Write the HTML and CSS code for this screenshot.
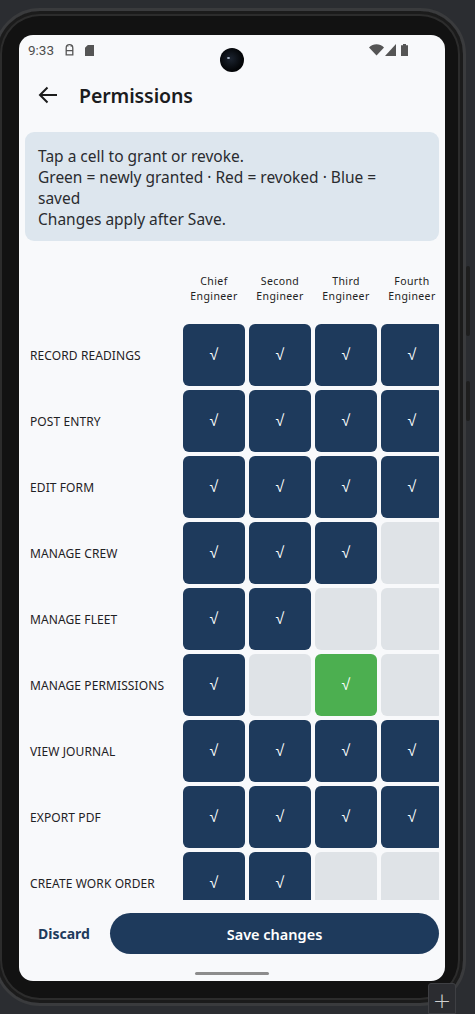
FILE: index.html
```html
<!DOCTYPE html>
<html lang="en">
<head>
<meta charset="utf-8">
<title>Permissions</title>
<link rel="stylesheet" href="styles.css">
</head>
<body>
<div class="phone">
  <div class="side-btn side-btn-1"></div>
  <div class="side-btn side-btn-2"></div>
  <div class="screen">
    <div class="camera"><span class="lens"></span></div>
    <div class="status">
      <div class="status-left">
        <span class="time">9:33</span>
        <svg class="st-icon" width="9" height="12" viewBox="0 0 9 12"><path d="M1.2 4a3.3 3.3 0 0 1 6.6 0v6.8H1.2z M1.2 6.6h6.6" fill="none" stroke="#555" stroke-width="1.3"/><path d="M2 1.2l1 1.4M7 1.2 6 2.6" stroke="#555" stroke-width="1"/></svg>
        <svg class="st-icon sd" width="9" height="11" viewBox="0 0 9 11"><path d="M2.8 0H9v11H0V2.8z" fill="#555"/></svg>
      </div>
      <div class="status-right">
        <svg width="15" height="12" viewBox="0 0 15 12"><path d="M0 3.4C4.3 -0.9 10.7 -0.9 15 3.4L7.5 11.5z" fill="#555"/></svg>
        <svg width="11" height="12" viewBox="0 0 11 12"><path d="M11 0v12H0z" fill="#555"/></svg>
        <svg width="7" height="12" viewBox="0 0 7 12"><path d="M2 0h3v1.2h2V12H0V1.2h2z" fill="#555"/></svg>
      </div>
    </div>
    <div class="appbar">
      <svg class="back" width="20" height="18" viewBox="0 0 20 18"><path d="M19 9H2M9.5 1.5 2 9l7.5 7.5" fill="none" stroke="#1c1c1c" stroke-width="2"/></svg>
      <h1 class="title">Permissions</h1>
    </div>
    <div class="content">
      <div class="info">
        Tap a cell to grant or revoke.<br>
        Green = newly granted · Red = revoked · Blue = saved<br>
        Changes apply after Save.
      </div>
      <div class="matrix-wrap">
        <div class="matrix">
          <div class="corner"></div>
          <div class="col-head">Chief<br>Engineer</div>
          <div class="col-head">Second<br>Engineer</div>
          <div class="col-head">Third<br>Engineer</div>
          <div class="col-head">Fourth<br>Engineer</div>

          <div class="row-label">RECORD READINGS</div>
          <div class="cell on">√</div><div class="cell on">√</div><div class="cell on">√</div><div class="cell on">√</div>

          <div class="row-label">POST ENTRY</div>
          <div class="cell on">√</div><div class="cell on">√</div><div class="cell on">√</div><div class="cell on">√</div>

          <div class="row-label">EDIT FORM</div>
          <div class="cell on">√</div><div class="cell on">√</div><div class="cell on">√</div><div class="cell on">√</div>

          <div class="row-label">MANAGE CREW</div>
          <div class="cell on">√</div><div class="cell on">√</div><div class="cell on">√</div><div class="cell off"></div>

          <div class="row-label">MANAGE FLEET</div>
          <div class="cell on">√</div><div class="cell on">√</div><div class="cell off"></div><div class="cell off"></div>

          <div class="row-label">MANAGE PERMISSIONS</div>
          <div class="cell on">√</div><div class="cell off"></div><div class="cell new">√</div><div class="cell off"></div>

          <div class="row-label">VIEW JOURNAL</div>
          <div class="cell on">√</div><div class="cell on">√</div><div class="cell on">√</div><div class="cell on">√</div>

          <div class="row-label">EXPORT PDF</div>
          <div class="cell on">√</div><div class="cell on">√</div><div class="cell on">√</div><div class="cell on">√</div>

          <div class="row-label">CREATE WORK ORDER</div>
          <div class="cell on">√</div><div class="cell on">√</div><div class="cell off"></div><div class="cell off"></div>
        </div>
      </div>
      <div class="actions">
        <button class="discard">Discard</button>
        <button class="save">Save changes</button>
      </div>
    </div>
    <div class="navbar"><span class="handle"></span></div>
  </div>
</div>
<div class="emu-plus">+</div>
</body>
</html>
```
FILE: styles.css
```css
* { box-sizing: border-box; }
html, body { margin: 0; padding: 0; }
body {
  width: 475px;
  height: 1014px;
  overflow: hidden;
  background: #2b2d31;
  font-family: "Noto Sans", "Liberation Sans", sans-serif;
  position: relative;
}
.phone {
  position: relative;
  width: 472px;
  height: 998px;
  margin: 8px 0 0 -6px;
  padding: 24px 0 0 22px;
  background: #121212;
  border-radius: 46px;
  border: 3px solid #3a3b3d;
  box-shadow: inset 0 0 0 3px #1b1b1b, inset 0 0 0 5px #2c2c2c;
}
.side-btn {
  position: absolute;
  right: -7px;
  width: 4px;
  background: #1e1e1e;
  border-radius: 2px;
}
.side-btn-1 { top: 255px; height: 70px; }
.side-btn-2 { top: 370px; height: 40px; }
.screen {
  position: relative;
  width: 426px;
  height: 946px;
  background: #f8f9fb;
  border-radius: 14px;
  overflow: hidden;
  display: flex;
  flex-direction: column;
}
.camera {
  position: absolute;
  left: 201px;
  top: 13px;
  width: 24px;
  height: 24px;
  border-radius: 50%;
  background: radial-gradient(circle at 45% 45%, #1c2430 0%, #05070a 60%, #000 100%);
}
.lens {
  position: absolute;
  left: 7px; top: 9px;
  width: 3px; height: 2px;
  border-radius: 50%;
  background: #a8b4c4;
}
.status {
  height: 30px;
  flex: none;
  display: flex;
  align-items: center;
  justify-content: space-between;
  padding: 0 37px 0 9px;
}
.status-left { display: flex; align-items: center; }
.time {
  font-family: "Roboto", sans-serif;
  font-size: 13.5px;
  color: #4d4d4d;
  margin-right: 11px;
}
.st-icon { margin-right: 11px; }
.status-right { display: flex; align-items: center; gap: 1px; }
.status-right svg:last-child { margin-left: 4px; }
.appbar {
  height: 60px;
  flex: none;
  display: flex;
  align-items: center;
  padding-left: 19px;
}
.back { margin-right: 21px; }
.title {
  margin: 0;
  font-size: 19.5px;
  font-weight: 600;
  color: #1b1c1e;
  letter-spacing: -0.1px;
}
.content {
  flex: 1;
  min-height: 0;
  display: flex;
  flex-direction: column;
  padding: 7px 6px 0;
}
.info {
  flex: none;
  background: #dde6ee;
  border-radius: 9px;
  padding: 14px 44px 11px 13px;
  font-size: 15.5px;
  line-height: 21px;
  color: #2a2c30;
}
.matrix-wrap {
  flex: 1;
  min-height: 0;
  overflow: hidden;
  padding-top: 33px;
}
.matrix {
  display: grid;
  grid-template-columns: 154px repeat(4, 62px);
  grid-template-rows: 46px;
  grid-auto-rows: 62px;
  gap: 4px;
  width: 418px;
}
.col-head {
  font-size: 10.5px;
  line-height: 15px;
  text-align: center;
  color: #222;
  letter-spacing: 0.4px;
}
.row-label {
  display: flex;
  align-items: center;
  padding-left: 5px;
  font-size: 12px;
  color: #1f2124;
  letter-spacing: 0.1px;
}
.cell {
  border-radius: 6px;
  display: flex;
  align-items: center;
  justify-content: center;
  color: #fff;
  font-family: "Liberation Sans", sans-serif;
  font-size: 16px;
}
.cell.on { background: #1e3a5c; }
.cell.off { background: #dfe3e7; }
.cell.new { background: #4caf50; }
.actions {
  flex: none;
  height: 60px;
  display: flex;
  align-items: flex-start;
  padding-top: 13px;
}
.actions button {
  font-family: inherit;
  border: none;
  cursor: pointer;
}
.discard {
  background: none;
  color: #1e3a5c;
  font-size: 14px;
  font-weight: 700;
  width: 85px;
  height: 41px;
  text-align: left;
  padding: 0 0 0 13px;
}
.save {
  flex: 1;
  height: 41px;
  border-radius: 21px;
  background: #1e3a5c;
  color: #fff;
  font-size: 14.5px;
  font-weight: 600;
}
.navbar {
  flex: none;
  height: 21px;
  display: flex;
  justify-content: center;
  padding-top: 12px;
}
.handle {
  width: 74px;
  height: 3px;
  border-radius: 2px;
  background: #8c8c8c;
}
.emu-plus {
  position: absolute;
  left: 428px;
  top: 983px;
  width: 28px;
  height: 31px;
  background: #2b2c30;
  border: 1px solid #3e3f43;
  border-radius: 3px 3px 0 0;
  color: #d0d0d0;
  font-family: "DejaVu Sans", sans-serif;
  font-size: 22px;
  font-weight: 300;
  line-height: 34px;
  text-align: center;
}
```
